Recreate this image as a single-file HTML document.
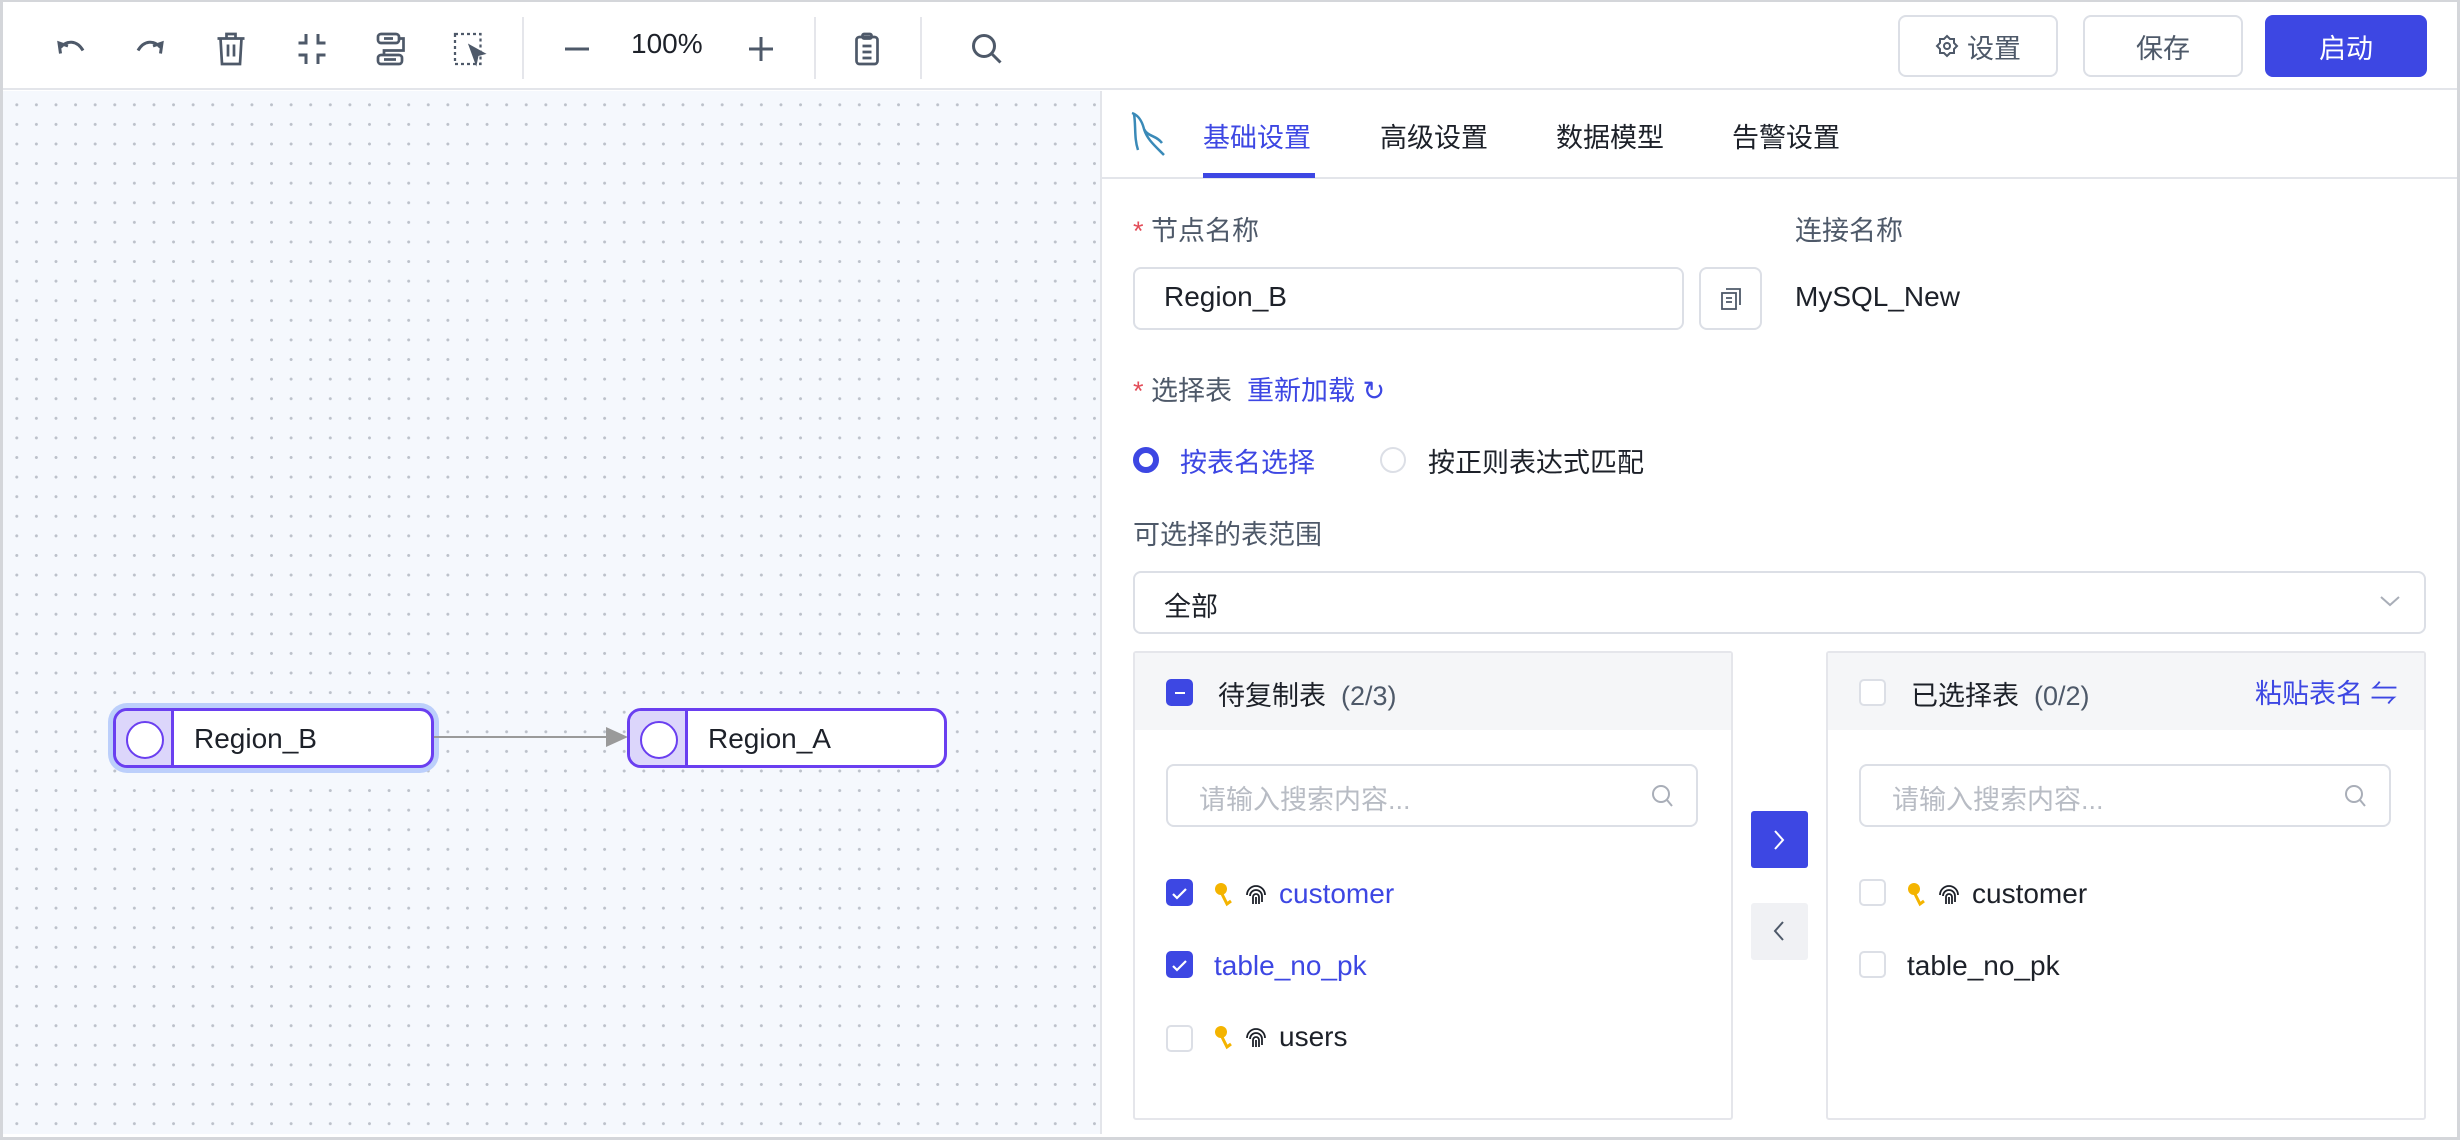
<!DOCTYPE html>
<html><head><meta charset="utf-8"><style>
*{box-sizing:border-box;margin:0;padding:0}
body{width:2460px;height:1140px;position:relative;overflow:hidden;background:#fff;font-family:"Liberation Sans","Noto Sans CJK SC",sans-serif;color:#1d2129;font-size:27px}
.a{position:absolute}
.frame{left:0;top:0;width:2460px;height:1140px;border:3px solid #d4d6da;border-top:2px solid #d4d6da}
.tb{left:3px;top:3px;width:2454px;height:87px;border-bottom:2px solid #e3e5ea;background:#fff}
.ic{position:absolute;top:28px;width:36px;height:36px}
.vd{position:absolute;top:14px;width:2px;height:62px;background:#e5e6eb}
.btn{position:absolute;top:12px;height:62px;border:2px solid #dcdfe6;border-radius:8px;display:flex;align-items:center;justify-content:center;font-size:27px;color:#4e5969;background:#fff}
.canvas{left:3px;top:91px;width:1097px;height:1043px;background-color:#f5f8fd;background-image:radial-gradient(circle,#bcc1ca 1.3px,transparent 1.7px);background-size:19.6px 19.6px;background-position:4px 4px}
.panel{left:1100px;top:91px;width:1357px;height:1043px;border-left:2px solid #e3e5ea;background:#fff}
.tab{position:absolute;top:116px;font-size:27px;color:#1d2129}
.lbl{color:#4e5969}
.star{color:#e34d59}
.inp{position:absolute;border:2px solid #dcdfe6;border-radius:8px;background:#fff}
.cb{position:absolute;width:27px;height:27px;border:2px solid #dcdfe6;border-radius:5px;background:#fff}
.cb.on{background:#3d47e3;border-color:#3d47e3}
.blue{color:#3d47e3}
.node{position:absolute;height:60px;border:3px solid #6a3ff0;border-radius:14px;background:#fff;overflow:hidden}
.node .l{position:absolute;left:0;top:0;width:58px;height:100%;background:#dcd6fb;border-right:3px solid #6a3ff0}
.node .c{position:absolute;left:10px;top:10px;width:38px;height:38px;border-radius:50%;background:#fff;border:2px solid #6a3ff0}
.node .t{position:absolute;left:78px;top:12px;font-size:28px;color:#1d2129}
</style></head><body>
<div class="a frame"></div>
<div class="a tb">
 <svg class="ic" style="left:50px" viewBox="0 0 24 24" fill="none" stroke="#4e5969" stroke-width="2"><path d="M5 15 4 8l6 2"/><path d="M5 11c4-5 11-5 15 2"/></svg>
 <svg class="ic" style="left:129px" viewBox="0 0 24 24" fill="none" stroke="#4e5969" stroke-width="2"><path d="M19 15l1-7-6 2"/><path d="M19 11C15 6 8 6 4 13"/></svg>
 <svg class="ic" style="left:210px" viewBox="0 0 24 24" fill="none" stroke="#4e5969" stroke-width="1.8"><path d="M3 5h18M9 5V2h6v3M5 5l1 17h12l1-17M10 9v8M14 9v8"/></svg>
 <svg class="ic" style="left:291px" viewBox="0 0 24 24" fill="none" stroke="#4e5969" stroke-width="2"><path d="M8 2v6H3M16 2v6h5M8 22v-6H3M16 22v-6h5"/></svg>
 <svg class="ic" style="left:369px" viewBox="0 0 24 24" fill="none" stroke="#4e5969" stroke-width="1.8"><rect x="4" y="2" width="14" height="6" rx="2"/><rect x="4" y="16" width="16" height="6" rx="2"/><path d="M18 5h3v8H8v3M8 5h6M8 19h8"/></svg>
 <svg class="ic" style="left:449px" viewBox="0 0 24 24" fill="none" stroke="#4e5969" stroke-width="1.5"><rect x="2" y="2" width="17" height="20" stroke-dasharray="2 2"/><path d="M12 10l9 5-4 1-1 5z" fill="#4e5969"/></svg>
 <div class="vd" style="left:519px"></div>
 <svg class="ic" style="left:556px" viewBox="0 0 24 24" stroke="#4e5969" stroke-width="2"><path d="M4 12h16"/></svg>
 <div class="a" style="left:628px;top:25px;font-size:28px;color:#1d2129">100%</div>
 <svg class="ic" style="left:740px" viewBox="0 0 24 24" stroke="#4e5969" stroke-width="2"><path d="M4 12h16M12 4v16"/></svg>
 <div class="vd" style="left:811px"></div>
 <svg class="ic" style="left:846px" viewBox="0 0 24 24" fill="none" stroke="#4e5969" stroke-width="1.8"><rect x="5" y="4" width="14" height="18" rx="2"/><rect x="9" y="2" width="6" height="3" rx="1"/><path d="M9 10h6M9 14h6M9 18h6"/></svg>
 <div class="vd" style="left:917px"></div>
 <svg class="ic" style="left:966px" viewBox="0 0 24 24" fill="none" stroke="#4e5969" stroke-width="2"><circle cx="10" cy="10" r="7"/><path d="M15 15l6 6"/></svg>
 <div class="btn" style="left:1895px;width:160px"><svg width="24" height="24" viewBox="0 0 24 24" fill="none" stroke="#4e5969" stroke-width="2" style="margin-right:8px"><circle cx="12" cy="12" r="3"/><path d="M12 2l3 3h4v4l3 3-3 3v4h-4l-3 3-3-3H5v-4l-3-3 3-3V5h4z"/></svg>设置</div>
 <div class="btn" style="left:2080px;width:160px">保存</div>
 <div class="btn" style="left:2262px;width:162px;background:#3d47e3;border-color:#3d47e3;color:#fff">启动</div>
</div>
<div class="a canvas"></div>
<div class="node" style="left:113px;top:708px;width:321px;box-shadow:0 0 0 5px #bccffb"><div class="l"></div><div class="c"></div><div class="t">Region_B</div></div>
<div class="a" style="left:434px;top:736px;width:180px;height:2px;background:#9a9a9a"></div>
<svg class="a" style="left:606px;top:727px" width="22" height="20"><path d="M0 0L22 10L0 20z" fill="#9a9a9a"/></svg>
<div class="node" style="left:627px;top:708px;width:320px"><div class="l"></div><div class="c"></div><div class="t">Region_A</div></div>

<div class="a panel"></div>
<div class="a" style="left:1102px;top:177px;width:1355px;height:2px;background:#e3e5ea"></div>
<svg class="a" style="left:1128px;top:110px" width="42" height="50" viewBox="0 0 42 50" fill="none" stroke="#3a8ab8" stroke-width="2.5"><path d="M4 3c6 2 10 8 12 16 3 10 10 16 20 26M6 4c2 12 0 24 4 36M16 19c4 8 12 6 18 14"/></svg>
<div class="tab blue" style="left:1203px">基础设置</div>
<div class="a" style="left:1203px;top:173px;width:112px;height:5px;background:#3d47e3"></div>
<div class="tab" style="left:1380px">高级设置</div>
<div class="tab" style="left:1556px">数据模型</div>
<div class="tab" style="left:1732px">告警设置</div>

<div class="a lbl" style="left:1133px;top:209px"><span class="star">* </span>节点名称</div>
<div class="a lbl" style="left:1795px;top:209px">连接名称</div>
<div class="inp" style="left:1133px;top:267px;width:551px;height:63px"></div>
<div class="a" style="left:1164px;top:281px;font-size:28px">Region_B</div>
<div class="inp" style="left:1699px;top:267px;width:63px;height:63px"></div>
<svg class="a" style="left:1719px;top:287px" width="24" height="24" viewBox="0 0 24 24" fill="none" stroke="#4e5969" stroke-width="1.8"><rect x="3" y="6" width="14" height="16"/><path d="M7 2h14v16M7 11h6M7 15h6"/></svg>
<div class="a" style="left:1795px;top:281px;font-size:28px">MySQL_New</div>

<div class="a lbl" style="left:1133px;top:369px"><span class="star">* </span>选择表 <span class="blue">&nbsp;重新加载 ↻</span></div>

<div class="a" style="left:1133px;top:447px;width:26px;height:26px;border:6px solid #3d47e3;border-radius:50%"></div>
<div class="a blue" style="left:1180px;top:441px">按表名选择</div>
<div class="a" style="left:1380px;top:447px;width:26px;height:26px;border:2px solid #dcdfe6;border-radius:50%"></div>
<div class="a" style="left:1428px;top:441px">按正则表达式匹配</div>

<div class="a lbl" style="left:1133px;top:513px">可选择的表范围</div>
<div class="inp" style="left:1133px;top:571px;width:1293px;height:63px"></div>
<div class="a" style="left:1164px;top:585px">全部</div>
<svg class="a" style="left:2378px;top:593px" width="24" height="16" viewBox="0 0 24 16" fill="none" stroke="#a9aeb8" stroke-width="2"><path d="M3 4l9 8 9-8"/></svg>

<div class="a" style="left:1133px;top:651px;width:600px;height:469px;border:2px solid #e5e6eb;border-radius:3px"></div>
<div class="a" style="left:1135px;top:653px;width:596px;height:77px;background:#f5f6f8"></div>
<div class="cb on" style="left:1166px;top:679px"><div style="position:absolute;left:7px;top:11px;width:10px;height:2px;background:#fff"></div></div>
<div class="a" style="left:1218px;top:674px;color:#1d2129">待复制表 <span class="lbl">&nbsp;(2/3)</span></div>
<div class="inp" style="left:1166px;top:764px;width:532px;height:63px"></div>
<div class="a" style="left:1199px;top:778px;color:#b8bcc4">请输入搜索内容...</div>
<svg class="a" style="left:1650px;top:783px" width="24" height="26" viewBox="0 0 24 26" fill="none" stroke="#a9aeb8" stroke-width="2"><circle cx="11" cy="11" r="8"/><path d="M17 17l5 6"/></svg>

<div class="cb on" style="left:1166px;top:879px"><svg width="23" height="23" viewBox="0 0 23 23" fill="none" stroke="#fff" stroke-width="2.2"><path d="M5 12l4 4 9-9"/></svg></div>
<svg class="a" style="left:1214px;top:882px" width="20" height="26" viewBox="0 0 20 26"><circle cx="7" cy="7" r="6" fill="#f4b400"/><path d="M8 12l5 10 4-3" stroke="#f4b400" stroke-width="3" fill="none"/></svg>
<svg class="a" style="left:1245px;top:884px" width="22" height="22" viewBox="0 0 22 22" fill="none" stroke="#1d2129" stroke-width="1.8"><path d="M2 11a9 9 0 0 1 18 0M5 12a6 6 0 0 1 12 0v6M8 20v-7a3 3 0 0 1 6 0v7M11 13v7"/></svg>
<div class="a blue" style="left:1279px;top:878px;font-size:28px">customer</div>
<div class="cb on" style="left:1166px;top:951px"><svg width="23" height="23" viewBox="0 0 23 23" fill="none" stroke="#fff" stroke-width="2.2"><path d="M5 12l4 4 9-9"/></svg></div>
<div class="a blue" style="left:1214px;top:950px;font-size:28px">table_no_pk</div>
<div class="cb" style="left:1166px;top:1025px"></div>
<svg class="a" style="left:1214px;top:1025px" width="20" height="26" viewBox="0 0 20 26"><circle cx="7" cy="7" r="6" fill="#f4b400"/><path d="M8 12l5 10 4-3" stroke="#f4b400" stroke-width="3" fill="none"/></svg>
<svg class="a" style="left:1245px;top:1027px" width="22" height="22" viewBox="0 0 22 22" fill="none" stroke="#1d2129" stroke-width="1.8"><path d="M2 11a9 9 0 0 1 18 0M5 12a6 6 0 0 1 12 0v6M8 20v-7a3 3 0 0 1 6 0v7M11 13v7"/></svg>
<div class="a" style="left:1279px;top:1021px;font-size:28px">users</div>

<div class="a" style="left:1751px;top:811px;width:57px;height:57px;background:#3d47e3;border-radius:3px"></div>
<svg class="a" style="left:1770px;top:827px" width="18" height="26" viewBox="0 0 18 26" fill="none" stroke="#fff" stroke-width="2"><path d="M5 4l8 9-8 9"/></svg>
<div class="a" style="left:1751px;top:903px;width:57px;height:57px;background:#f0f1f4;border-radius:3px"></div>
<svg class="a" style="left:1770px;top:918px" width="18" height="26" viewBox="0 0 18 26" fill="none" stroke="#4e5969" stroke-width="2"><path d="M13 4l-8 9 8 9"/></svg>

<div class="a" style="left:1826px;top:651px;width:600px;height:469px;border:2px solid #e5e6eb;border-radius:3px"></div>
<div class="a" style="left:1828px;top:653px;width:596px;height:77px;background:#f5f6f8"></div>
<div class="cb" style="left:1859px;top:679px"></div>
<div class="a" style="left:1911px;top:674px">已选择表 <span class="lbl">&nbsp;(0/2)</span></div>
<div class="a blue" style="left:2255px;top:672px">粘贴表名 ⇋</div>
<div class="inp" style="left:1859px;top:764px;width:532px;height:63px"></div>
<div class="a" style="left:1892px;top:778px;color:#b8bcc4">请输入搜索内容...</div>
<svg class="a" style="left:2343px;top:783px" width="24" height="26" viewBox="0 0 24 26" fill="none" stroke="#a9aeb8" stroke-width="2"><circle cx="11" cy="11" r="8"/><path d="M17 17l5 6"/></svg>
<div class="cb" style="left:1859px;top:879px"></div>
<svg class="a" style="left:1907px;top:882px" width="20" height="26" viewBox="0 0 20 26"><circle cx="7" cy="7" r="6" fill="#f4b400"/><path d="M8 12l5 10 4-3" stroke="#f4b400" stroke-width="3" fill="none"/></svg>
<svg class="a" style="left:1938px;top:884px" width="22" height="22" viewBox="0 0 22 22" fill="none" stroke="#1d2129" stroke-width="1.8"><path d="M2 11a9 9 0 0 1 18 0M5 12a6 6 0 0 1 12 0v6M8 20v-7a3 3 0 0 1 6 0v7M11 13v7"/></svg>
<div class="a" style="left:1972px;top:878px;font-size:28px">customer</div>
<div class="cb" style="left:1859px;top:951px"></div>
<div class="a" style="left:1907px;top:950px;font-size:28px">table_no_pk</div>
</body></html>
